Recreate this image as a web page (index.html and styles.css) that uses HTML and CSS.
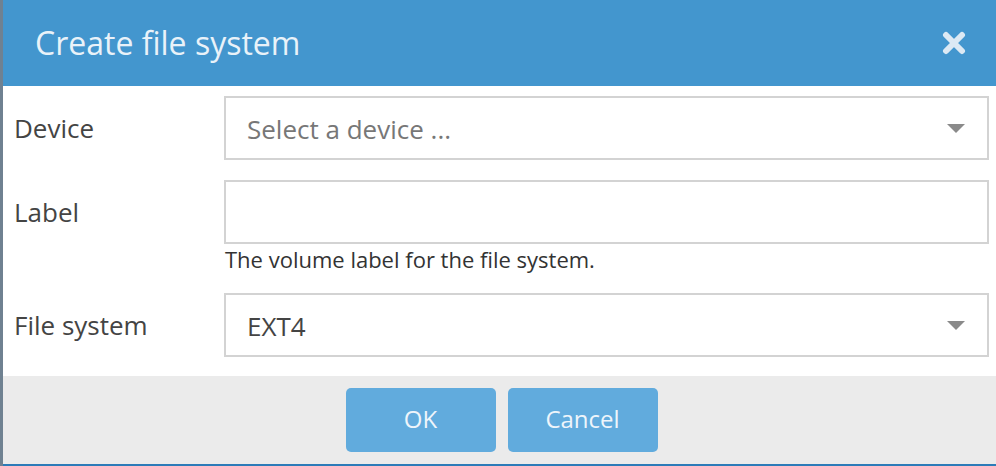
FILE: index.html
```html
<!DOCTYPE html>
<html>
<head>
<meta charset="utf-8">
<link rel="stylesheet" href="styles.css">
</head>
<body>
<div class="dialog">
  <div class="header">
    <span class="title">Create file system</span>
    <svg class="close" width="24" height="24" viewBox="0 0 24 24"><path d="M4 4 L20 20 M20 4 L4 20" stroke="#dce9f4" stroke-width="6" stroke-linecap="round"/></svg>
  </div>
  <div class="body">
    <div class="row">
      <div class="label">Device</div>
      <div class="field">
        <div class="box select"><span class="placeholder">Select a device ...</span><span class="caret"></span></div>
      </div>
    </div>
    <div class="row">
      <div class="label">Label</div>
      <div class="field">
        <div class="box"></div>
        <div class="help">The volume label for the file system.</div>
      </div>
    </div>
    <div class="row">
      <div class="label">File system</div>
      <div class="field">
        <div class="box select"><span class="value">EXT4</span><span class="caret"></span></div>
      </div>
    </div>
  </div>
  <div class="footer">
    <button class="btn">OK</button>
    <button class="btn">Cancel</button>
  </div>
</div>
</body>
</html>
```
FILE: styles.css
```css
html, body { margin: 0; padding: 0; }
body {
  background: #6f8191;
  font-family: "Open Sans", "Noto Sans", sans-serif;
  width: 996px;
  height: 466px;
  overflow: hidden;
}
.dialog {
  margin-left: 3px;
  height: 464px;
  background: #fff;
  border-bottom: 2px solid #2c7bb8;
  display: flex;
  flex-direction: column;
}
.header {
  height: 86px;
  background: #4396ce;
  display: flex;
  align-items: center;
  justify-content: space-between;
  padding: 0 30px 0 32px;
}
.title {
  color: #e9f2f9;
  font-size: 32px;
  margin-top: -2px;
}
.close { display: block; margin-top: -1px; }
.body {
  flex: 1;
  padding: 10px 7px 0 11px;
  display: flex;
  flex-direction: column;
  gap: 20px;
}
.row {
  display: grid;
  grid-template-columns: 210px 1fr;
}
.label {
  font-size: 26px;
  color: #444;
  height: 64px;
  display: flex;
  align-items: center;
}
.box {
  height: 60px;
  border: 2px solid #d3d3d3;
  background: #fff;
  display: flex;
  align-items: center;
  padding: 0 21px;
  font-size: 26px;
}
.placeholder { color: #777; flex: 1; margin-top: 2px; }
.value { color: #444; flex: 1; margin-top: 2px; }
.caret {
  width: 0; height: 0;
  border-left: 9px solid transparent;
  border-right: 9px solid transparent;
  border-top: 9px solid #8a8a8a;
  margin-right: 1px;
}
.help {
  font-size: 22px;
  line-height: 28px;
  color: #333;
  margin-top: 1px;
  padding-left: 1px;
}
.footer {
  height: 88px;
  background: #ebebeb;
  display: flex;
  justify-content: center;
  align-items: center;
  gap: 12px;
  padding-left: 4px;
}
.btn {
  width: 150px;
  height: 64px;
  border: none;
  border-radius: 5px;
  background: #61abdd;
  color: #eef5fb;
  font-family: "Open Sans", "Noto Sans", sans-serif;
  font-size: 24px;
  padding: 0 0 3px;
}
```
